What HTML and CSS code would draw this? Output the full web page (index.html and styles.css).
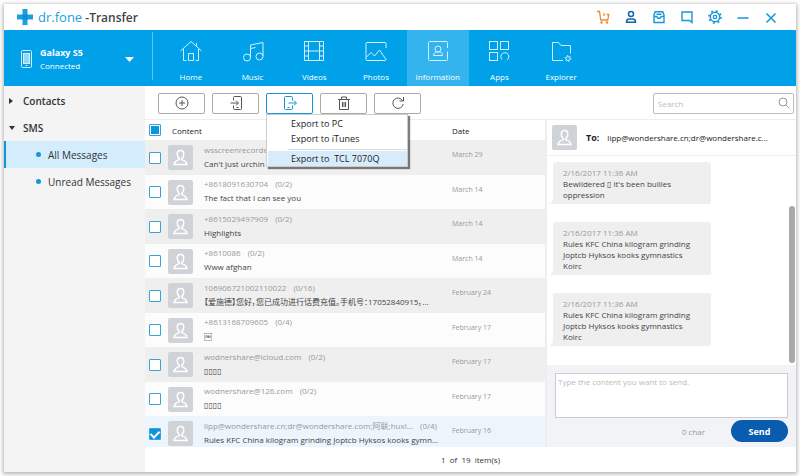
FILE: index.html
```html
<!DOCTYPE html>
<html lang="en">
<head>
    <meta charset="UTF-8">
    <meta name="viewport" content="width=device-width, initial-scale=1.0">
    <title>dr.fone - Transfer</title>
    <link rel="stylesheet" href="styles.css">
</head>
<body>
    <!-- Shared avatar picture -->
    <svg class="sprite" aria-hidden="true">
        <symbol id="avatar" viewBox="0 0 25 25">
            <rect width="25" height="25" rx="2" fill="#cfd3d7"/>
            <path d="M12.500 5.500c2.200 0 3.300 1.500 3.300 3.600 0 1.900-.8 3.500-2 4.300v1.200c2.400.7 4.600 2 5.200 4.900h-13c.6-2.900 2.800-4.200 5.200-4.900v-1.200c-1.200-.8-2-2.400-2-4.300 0-2.100 1.100-3.600 3.300-3.600z" fill="none" stroke="#fff" stroke-width="1.500"/>
        </symbol>
    </svg>

    <div class="window">
        <header class="titlebar">
            <svg class="logo" width="16" height="16" viewBox="0 0 16 16" aria-hidden="true">
                <path d="M5.500 0h5v5.500H16v5h-5.500V16h-5v-5.500H0v-5h5.500z" fill="#1a9fe0"/>
                <path d="M5.500 5.500h5v5h-5z" fill="#0b8fd6"/>
            </svg>
            <h1 class="brand"><span>dr.fone</span> -Transfer</h1>
            <div class="window-tools">
                <button type="button" aria-label="Buy">
                    <svg width="14" height="14" viewBox="0 0 14 14" fill="none" stroke="#ee8a2e" stroke-width="1.300"><path d="M1 1.500h2.500l1.300 8.500h7l.9-5.500h-2.200M8 3v3"/><circle cx="5.500" cy="12.500" r=".6"/><circle cx="11" cy="12.500" r=".6"/></svg>
                </button>
                <button type="button" aria-label="Account">
                    <svg width="14" height="14" viewBox="0 0 14 14" fill="none" stroke="#1763ad" stroke-width="1.500"><circle cx="7" cy="4" r="2.500"/><path d="M2.500 12.300c0-2.300 1-3.300 2.500-3.300h4c1.500 0 2.500 1 2.500 3.300z"/></svg>
                </button>
                <button type="button" aria-label="Inbox">
                    <svg width="14" height="14" viewBox="0 0 14 14" fill="none" stroke="#1596d8" stroke-width="1.400"><path d="M2 12.500V5l1.200-3.200h7.600L12 5v7.500zM2 6.500h2.800l1 1.800h2.400l1-1.800H12M4.500 4.200h5"/></svg>
                </button>
                <button type="button" aria-label="Feedback">
                    <svg width="14" height="14" viewBox="0 0 14 14" fill="none" stroke="#1596d8" stroke-width="1.400"><path d="M2 2h10v10.500L9.500 10.500H2z"/></svg>
                </button>
                <button type="button" aria-label="Settings">
                    <svg width="14" height="14" viewBox="0 0 14 14" fill="none" stroke="#1596d8"><circle cx="7" cy="7" r="4.700" stroke-width="1.500"/><circle cx="7" cy="7" r="1.700" stroke-width="1.300"/><circle cx="7" cy="7" r="6.100" stroke-width="1.500" stroke-dasharray="2 2.790"/></svg>
                </button>
                <button type="button" aria-label="Minimize">
                    <svg width="14" height="14" viewBox="0 0 14 14" fill="none" stroke="#1596d8" stroke-width="1.500"><path d="M1.500 8h11"/></svg>
                </button>
                <button type="button" aria-label="Close">
                    <svg width="14" height="14" viewBox="0 0 14 14" fill="none" stroke="#1596d8" stroke-width="1.500"><path d="M2.500 3.500l9 9M11.500 3.500l-9 9"/></svg>
                </button>
            </div>
        </header>

        <div class="navbar">
            <button type="button" class="device">
                <svg width="11" height="18" viewBox="0 0 11 18" fill="none" stroke="#d4f0fd" aria-hidden="true"><rect x=".5" y=".5" width="10" height="17" rx="1"/><rect x="2.500" y="3.500" width="6" height="10" fill="#8fd6f8"/><path d="M4.500 15.500h2"/></svg>
                <span class="device-text">
                    <strong>Galaxy S5</strong>
                    <span>Connected</span>
                </span>
                <svg width="9" height="5" viewBox="0 0 9 5" aria-hidden="true"><path d="M0 0h9L4.500 5z" fill="#fff"/></svg>
            </button>
            <nav class="tabs">
                <a href="#home">
                    <svg viewBox="0 0 24 24"><path d="M1.500 12L12 2.500 22.500 12M4.500 10v11.500h3M16.500 21.500h3V10M9.500 21.500v-7h5v7zM17.500 7V4"/></svg>
                    Home
                </a>
                <a href="#music">
                    <svg viewBox="0 0 24 24"><path d="M9.500 18.500V6L22 3.500v13.500M9.500 9.500l5-1"/><circle cx="6" cy="18.500" r="3.500"/><circle cx="18.500" cy="17.500" r="3.500"/></svg>
                    Music
                </a>
                <a href="#videos">
                    <svg viewBox="0 0 24 24"><path d="M2.500 2.500h19v19h-19zM6.500 2.500v19M17.500 2.500v19M6.500 12h11M2.500 7h4M2.500 12h4M2.500 17h4M17.500 7h4M17.500 12h4M17.500 17h4"/></svg>
                    Videos
                </a>
                <a href="#photos">
                    <svg viewBox="0 0 24 24"><path d="M22 9V4.500a1 1 0 0 0-1-1H3a1 1 0 0 0-1 1v16a1 1 0 0 0 1 1h18a1 1 0 0 0 1-1L15.500 11 10.500 17l-3.500-3.500L2.500 18"/></svg>
                    Photos
                </a>
                <a href="#information" class="active">
                    <svg viewBox="0 0 24 24"><path d="M21.500 9V3.500a1 1 0 0 0-1-1h-17a1 1 0 0 0-1 1v17a1 1 0 0 0 1 1h17a1 1 0 0 0 1-1v-8M7.500 16.500c0-2 1-3 2.500-3.500h4c1.500.5 2.500 1.500 2.500 3.500z"/><circle cx="12" cy="10" r="3"/></svg>
                    Information
                </a>
                <a href="#apps">
                    <svg viewBox="0 0 24 24"><rect x="2.500" y="2.500" width="8" height="8"/><rect x="13.500" y="2.500" width="8" height="8"/><rect x="2.500" y="13.500" width="8" height="8"/><path d="M15 20.500a4 4 0 1 1 5 0.500"/></svg>
                    Apps
                </a>
                <a href="#explorer">
                    <svg viewBox="0 0 24 24"><path d="M14 21.500H3.500v-18h6l2.500 3h9.500v8"/><circle cx="19" cy="19.500" r="2"/><circle cx="19" cy="19.500" r="3" stroke-dasharray="1.300 1.840"/></svg>
                    Explorer
                </a>
            </nav>
        </div>

        <div class="body">
            <aside class="sidebar">
                <a href="#contacts" class="group closed">Contacts</a>
                <a href="#sms" class="group open">SMS</a>
                <a href="#all" class="folder selected">All Messages</a>
                <a href="#unread" class="folder">Unread Messages</a>
            </aside>

            <main class="main">
                <div class="toolbar">
                    <button type="button" class="tool" aria-label="Add">
                        <svg viewBox="0 0 14 14"><circle cx="7" cy="7" r="6"/><path d="M7 4v6M4 7h6"/></svg>
                    </button>
                    <button type="button" class="tool" aria-label="Import">
                        <svg viewBox="0 0 14 14"><path d="M4.500 4.500v-3a1 1 0 0 1 1-1h6a1 1 0 0 1 1 1v11a1 1 0 0 1-1 1h-6a1 1 0 0 1-1-1v-3M1.500 7H9M7 4.500L9.500 7 7 9.500M7.500 11.500h2"/></svg>
                    </button>
                    <div class="export">
                        <button type="button" class="tool tool-on" aria-label="Export" aria-expanded="true">
                            <svg viewBox="0 0 14 14"><path d="M9.500 4.500v-3a1 1 0 0 0-1-1h-6a1 1 0 0 0-1 1v11a1 1 0 0 0 1 1h6a1 1 0 0 0 1-1v-3M5.500 7H13M11 4.500L13.500 7 11 9.500M4.500 11.500h2"/></svg>
                        </button>
                        <div class="menu">
                            <button type="button">Export to PC</button>
                            <button type="button">Export to iTunes</button>
                            <hr>
                            <button type="button" class="hover">Export to&nbsp; TCL 7070Q</button>
                        </div>
                    </div>
                    <button type="button" class="tool" aria-label="Delete">
                        <svg viewBox="0 0 14 14"><path d="M1 3.500h12M4.500 3V1h5v2M2.500 3.500v10h9v-10M5.500 6v5M7 6v5M8.500 6v5"/></svg>
                    </button>
                    <button type="button" class="tool" aria-label="Refresh">
                        <svg viewBox="0 0 14 14"><path d="M11.500 4.500A5.200 5.200 0 1 0 12.200 8M12.500 1v4H8.500"/></svg>
                    </button>
                    <label class="search">
                        <input type="search" placeholder="Search" aria-label="Search">
                        <svg viewBox="0 0 14 14"><circle cx="6" cy="6" r="4"/><path d="M9 9l3.500 3.500"/></svg>
                    </label>
                </div>

                <div class="content">
                    <section class="list">
                        <table>
                            <thead>
                                <tr>
                                    <th class="col-check"><input type="checkbox" class="partial" aria-label="Select all"></th>
                                    <th class="col-content" colspan="2">Content</th>
                                    <th class="col-date">Date</th>
                                </tr>
                            </thead>
                            <tbody>
                                <tr>
                                    <td><input type="checkbox" aria-label="Select wsscreenrecorder"></td>
                                    <td class="who"><svg class="avatar"><use href="#avatar"/></svg></td>
                                    <td class="message"><p class="from">wsscreenrecorder</p><p class="text">Can't just urchin</p></td>
                                    <td class="date">March 29</td>
                                </tr>
                                <tr>
                                    <td><input type="checkbox" aria-label="Select +8618091630704"></td>
                                    <td class="who"><svg class="avatar"><use href="#avatar"/></svg></td>
                                    <td class="message"><p class="from">+8618091630704 <span>(0/2)</span></p><p class="text">The fact that I can see you</p></td>
                                    <td class="date">March 14</td>
                                </tr>
                                <tr>
                                    <td><input type="checkbox" aria-label="Select +8615029497909"></td>
                                    <td class="who"><svg class="avatar"><use href="#avatar"/></svg></td>
                                    <td class="message"><p class="from">+8615029497909 <span>(0/2)</span></p><p class="text">Highlights</p></td>
                                    <td class="date">March 14</td>
                                </tr>
                                <tr>
                                    <td><input type="checkbox" aria-label="Select +8610086"></td>
                                    <td class="who"><svg class="avatar"><use href="#avatar"/></svg></td>
                                    <td class="message"><p class="from">+8610086 <span>(0/2)</span></p><p class="text">Www afghan</p></td>
                                    <td class="date">March 14</td>
                                </tr>
                                <tr>
                                    <td><input type="checkbox" aria-label="Select 106906721002110022"></td>
                                    <td class="who"><svg class="avatar"><use href="#avatar"/></svg></td>
                                    <td class="message"><p class="from">106906721002110022 <span>(0/16)</span></p><p class="text">【爱施德】您好，您已成功进行话费充值。手机号：17052840915，...</p></td>
                                    <td class="date">February 24</td>
                                </tr>
                                <tr>
                                    <td><input type="checkbox" aria-label="Select +8613168709605"></td>
                                    <td class="who"><svg class="avatar"><use href="#avatar"/></svg></td>
                                    <td class="message"><p class="from">+8613168709605 <span>(0/4)</span></p><p class="text">&#xFFFC;</p></td>
                                    <td class="date">February 17</td>
                                </tr>
                                <tr>
                                    <td><input type="checkbox" aria-label="Select wodnershare@icloud.com"></td>
                                    <td class="who"><svg class="avatar"><use href="#avatar"/></svg></td>
                                    <td class="message"><p class="from">wodnershare@icloud.com <span>(0/2)</span></p><p class="text">▯▯▯▯</p></td>
                                    <td class="date">February 17</td>
                                </tr>
                                <tr>
                                    <td><input type="checkbox" aria-label="Select wodnershare@126.com"></td>
                                    <td class="who"><svg class="avatar"><use href="#avatar"/></svg></td>
                                    <td class="message"><p class="from">wodnershare@126.com <span>(0/2)</span></p><p class="text">▯▯▯▯</p></td>
                                    <td class="date">February 17</td>
                                </tr>
                                <tr class="current">
                                    <td><input type="checkbox" checked aria-label="Select lipp@wondershare.cn"></td>
                                    <td class="who"><svg class="avatar"><use href="#avatar"/></svg></td>
                                    <td class="message"><p class="from">lipp@wondershare.cn;dr@wondershare.com;阿联;huxl... <span>(0/4)</span></p><p class="text">Rules KFC China kilogram grinding Joptcb Hyksos kooks gymn...</p></td>
                                    <td class="date">February 16</td>
                                </tr>
                            </tbody>
                        </table>
                    </section>

                    <section class="chat">
                        <div class="chat-head">
                            <svg class="avatar"><use href="#avatar"/></svg>
                            <strong>To:</strong>
                            <span>lipp@wondershare.cn;dr@wondershare.c...</span>
                        </div>
                        <div class="thread">
                            <div class="bubbles">
                                <div class="bubble"><time>2/16/2017 11:36 AM</time><p>Bewildered ▯ it's been bullies oppression</p></div>
                                <div class="bubble"><time>2/16/2017 11:36 AM</time><p>Rules KFC China kilogram grinding Joptcb Hyksos kooks gymnastics Koirc</p></div>
                                <div class="bubble"><time>2/16/2017 11:36 AM</time><p>Rules KFC China kilogram grinding Joptcb Hyksos kooks gymnastics Koirc</p></div>
                            </div>
                            <div class="track"><div class="thumb"></div></div>
                        </div>
                        <form class="composer">
                            <textarea placeholder="Type the content you want to send." aria-label="Message"></textarea>
                            <div class="composer-foot">
                                <span>0 char</span>
                                <button type="button">Send</button>
                            </div>
                        </form>
                    </section>
                </div>

                <footer class="status">1&nbsp; of&nbsp; 19&nbsp; item(s)</footer>
            </main>
        </div>
    </div>
</body>
</html>
```

FILE: styles.css
```css
* {
    box-sizing: border-box;
}
body {
    margin: 0;
    height: 100vh;
    padding: 4px;
    background-color: #fff;
    color: #333;
    font-family: "Open Sans", "Noto Sans CJK SC", "DejaVu Sans", sans-serif;
    font-size: 8px;
}
button,
input,
textarea {
    font-family: inherit;
    font-size: inherit;
    color: inherit;
}
button {
    padding: 0;
    border: none;
    background: none;
    cursor: pointer;
}
a {
    color: inherit;
    text-decoration: none;
}
p {
    margin: 0;
}
.sprite {
    display: none;
}
.window {
    display: flex;
    flex-direction: column;
    height: 100%;
    background-color: #fff;
    box-shadow: 0 1px 4px 1px rgba(0, 0, 0, 0.3);
}

/* Title bar */
.titlebar {
    display: flex;
    align-items: center;
    flex: 0 0 26px;
    padding: 0 11px 0 13px;
}
.brand {
    flex: 1;
    margin: 0 0 0 5px;
    font-size: 12px;
    line-height: 16px;
    font-weight: 600;
    color: #444;
}
.brand span {
    font-size: 13px;
    font-weight: 400;
    color: #1a9fe0;
}
.window-tools {
    display: flex;
}
.window-tools button {
    display: flex;
    align-items: center;
    justify-content: center;
    width: 28px;
    height: 24px;
}

/* Blue navigation */
.navbar {
    display: flex;
    flex: 0 0 56px;
    background-color: #01a1ea;
    color: #fff;
}
.device {
    display: flex;
    align-items: center;
    gap: 8px;
    width: 149px;
    margin: 2px 7px 6px 0;
    padding: 6px 18px 0 17px;
    border-right: 1px solid #5cc4f3;
    text-align: left;
}
.device-text {
    display: flex;
    flex-direction: column;
    flex: 1;
    line-height: 13px;
}
.device-text strong {
    font-size: 9px;
}
.tabs {
    display: grid;
    grid-template-columns: repeat(7, 1fr);
    flex: 0 1 432px;
}
.tabs a {
    display: flex;
    flex-direction: column;
    align-items: center;
    gap: 8px;
    padding-top: 9px;
    line-height: 12px;
}
.tabs a.active {
    background-color: #34b4ef;
}
.tabs svg {
    width: 24px;
    height: 24px;
    fill: none;
    stroke: #d4f0fd;
}

/* Sidebar */
.body {
    display: flex;
    flex: 1;
    min-height: 0;
}
.sidebar {
    flex: 0 0 141px;
    padding-top: 1px;
    background-color: #f4f4f4;
}
.sidebar a {
    display: flex;
    align-items: center;
    height: 27px;
    font-size: 10px;
}
.sidebar a::before {
    content: "";
}
.group {
    padding-left: 5px;
    font-weight: 600;
}
.group::before {
    border: 3px solid transparent;
}
.closed::before {
    margin-right: 10px;
    border-left: 4px solid #333;
    border-right-width: 0;
}
.open::before {
    margin-right: 8px;
    border-top: 4px solid #333;
    border-bottom-width: 0;
}
.folder {
    padding-left: 30px;
    border-left: 2px solid transparent;
}
.folder::before {
    width: 5px;
    height: 5px;
    margin-right: 7px;
    border-radius: 50%;
    background-color: #1596d8;
}
.selected {
    border-left-color: #1596d8;
    background-color: #d3edfc;
}

/* Toolbar */
.main {
    display: flex;
    flex-direction: column;
    flex: 1;
    min-width: 0;
}
.toolbar {
    display: flex;
    align-items: center;
    gap: 7px;
    flex: 0 0 33px;
    padding: 1px 2px 0 13px;
}
.tool {
    display: flex;
    align-items: center;
    justify-content: center;
    width: 47px;
    height: 21px;
    border: 1px solid #aaa;
    border-radius: 2px;
}
.tool svg,
.search svg {
    width: 14px;
    height: 14px;
    fill: none;
    stroke: #555;
}
.tool-on {
    border-color: #1596d8;
}
.tool-on svg {
    stroke: #1596d8;
}
.export {
    position: relative;
}
.menu {
    position: absolute;
    top: 100%;
    left: 0;
    z-index: 1;
    width: 142px;
    padding: 1px 0 0 1px;
    border: 1px solid #ccc;
    background-color: #fff;
    box-shadow: 2px 2px 1px rgba(0, 0, 0, 0.5);
    font-size: 9px;
}
.menu button {
    display: block;
    width: 100%;
    height: 15px;
    padding-left: 23px;
    text-align: left;
    color: #222;
}
.menu .hover {
    background-color: #d8ebfa;
}
.menu hr {
    margin: 3px 0 1px 20px;
    border: none;
    border-top: 1px solid #ddd;
}
.search {
    display: flex;
    align-items: center;
    width: 141px;
    height: 21px;
    margin-left: auto;
    padding: 0 2px 0 4px;
    border: 1px solid #bbb;
    border-radius: 2px;
}
.search input {
    flex: 1;
    min-width: 0;
    padding: 0;
    border: none;
    outline: none;
    background: none;
}
.search svg {
    stroke: #999;
}
::placeholder {
    color: #bbb;
}

/* Message list */
.content {
    display: flex;
    flex: 1;
    min-height: 0;
    border-top: 1px solid #eee;
}
.list {
    flex: 1;
    min-width: 0;
    overflow: hidden;
    border-right: 2px solid #eee;
}
table {
    width: 100%;
    border-collapse: collapse;
}
th {
    height: 20px;
    padding: 0;
    font-weight: 400;
    text-align: left;
    color: #222;
}
td {
    height: 34px;
    padding: 0;
    line-height: 14px;
}
tbody tr {
    background-color: #fcfcfc;
}
tbody tr:nth-child(odd) {
    background-color: #efefef;
}
tbody tr:nth-child(odd) td {
    height: 35px;
}
tbody tr.current {
    background-color: #ecf5fc;
}
.col-check {
    width: 23px;
}
.col-content {
    padding-left: 4px;
}
.col-date {
    width: 93px;
}
.who {
    width: 36px;
}
.message {
    padding-bottom: 2px;
    white-space: nowrap;
    font-feature-settings: "palt";
}
.text {
    color: #444;
}
.from {
    color: #999;
}
.from span {
    margin-left: 5px;
}
.date {
    padding-top: 8px;
    vertical-align: top;
    font-size: 7px;
    color: #999;
}
.avatar {
    display: block;
    flex: none;
    width: 25px;
    height: 25px;
}
input[type="checkbox"] {
    display: grid;
    place-items: center;
    appearance: none;
    width: 12px;
    height: 12px;
    margin: 0 0 0 4px;
    border: 1px solid #3aa3d5;
    border-radius: 1px;
    background-color: #fff;
}
input[type="checkbox"]:checked {
    background-color: #0b95dc;
}
input[type="checkbox"]:checked::before {
    content: "";
    width: 4px;
    height: 7px;
    margin-bottom: 2px;
    border: solid #fff;
    border-width: 0 2px 2px 0;
    transform: rotate(45deg);
}
.partial::before {
    content: "";
    width: 8px;
    height: 8px;
    background-color: #0b95dc;
}

/* Conversation */
.chat {
    display: flex;
    flex-direction: column;
    flex: 0 0 249px;
}
.chat-head {
    display: flex;
    align-items: center;
    flex: 0 0 36px;
    padding-left: 5px;
    border-bottom: 1px solid #eee;
    color: #222;
}
.chat-head strong {
    margin: 0 8px 0 9px;
    font-size: 9px;
}
.thread {
    display: flex;
    justify-content: space-between;
    flex: 1;
    min-height: 0;
    padding-right: 1px;
}
.bubbles {
    display: flex;
    flex-direction: column;
    gap: 18px;
    width: 164px;
    padding: 6px 0 0 6px;
}
.bubble {
    position: relative;
    padding: 5px 10px 4px;
    border-radius: 3px 3px 3px 0;
    background-color: #efefef;
    line-height: 11px;
    color: #444;
}
/* Tail of the bubble */
.bubble::after {
    content: "";
    position: absolute;
    left: -3px;
    bottom: 0;
    border-top: 4px solid transparent;
    border-right: 3px solid #efefef;
}
.bubble time {
    display: block;
    color: #999;
}
.track {
    display: flex;
    flex-direction: column;
    justify-content: flex-end;
    width: 6px;
    padding-bottom: 2px;
}
.thumb {
    height: 76%;
    border-radius: 3px;
    background-color: #aaa;
}
.composer {
    display: flex;
    flex-direction: column;
    padding: 8px 8px 5px;
    background-color: #f2f3f7;
}
.composer textarea {
    height: 45px;
    padding: 2px;
    border: 1px solid #ccc;
    outline: none;
    resize: none;
    background-color: #fff;
}
.composer-foot {
    display: flex;
    align-items: center;
    justify-content: flex-end;
    gap: 26px;
    padding-top: 2px;
    color: #999;
}
.composer-foot button {
    width: 57px;
    height: 22px;
    border-radius: 11px;
    background-color: #0a5cb0;
    color: #fff;
    font-size: 9px;
    font-weight: 700;
}
.status {
    flex: 0 0 25px;
    line-height: 25px;
    text-align: center;
}
```
